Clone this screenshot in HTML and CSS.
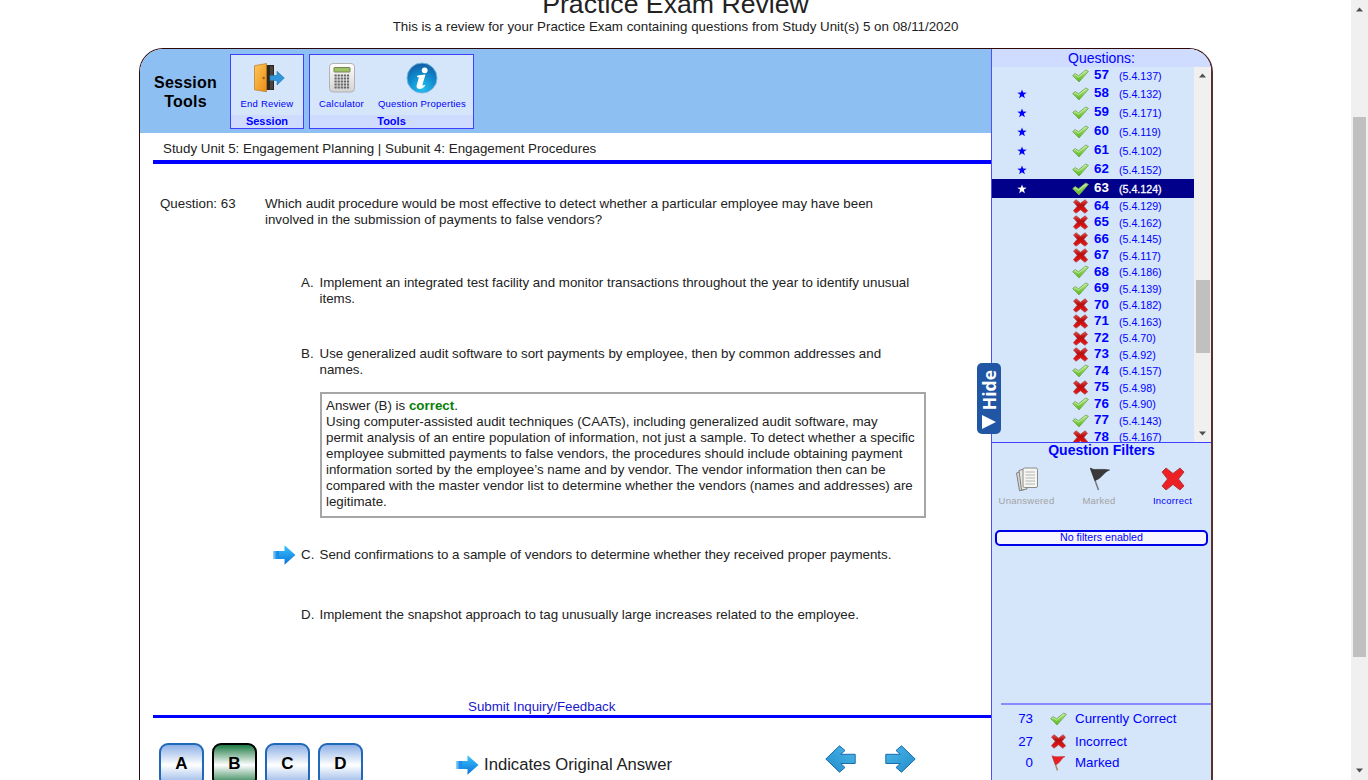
FILE: index.html
```
<!DOCTYPE html>
<html lang="en">
<head>
<meta charset="utf-8">
<title>Practice Exam Review</title>
<link rel="stylesheet" href="styles.css">
</head>
<body>
<svg class="defs" width="0" height="0">
  <defs>
    <linearGradient id="gGreen" x1="0" y1="0" x2="0" y2="1"><stop offset="0" stop-color="#b4ea8a"/><stop offset="1" stop-color="#55b914"/></linearGradient>
    <linearGradient id="gRed" x1="0" y1="0" x2="0" y2="1"><stop offset="0" stop-color="#e84a4a"/><stop offset=".4" stop-color="#b80d0d"/><stop offset="1" stop-color="#f01818"/></linearGradient>
    <linearGradient id="gArrow" x1="0" y1="0" x2="0" y2="1"><stop offset="0" stop-color="#3cc4fb"/><stop offset="1" stop-color="#0a73dd"/></linearGradient>
    <linearGradient id="gFade" x1="0" y1="0" x2="1" y2="0"><stop offset="0" stop-color="#2aa0ef" stop-opacity=".45"/><stop offset=".3" stop-color="#1c8fe8"/><stop offset="1" stop-color="#1587e6"/></linearGradient>
    <linearGradient id="gNav" x1="0" y1="0" x2="1" y2="1"><stop offset="0" stop-color="#49b8ea"/><stop offset="1" stop-color="#238bc9"/></linearGradient>
    <linearGradient id="gDoor" x1="0" y1="0" x2="1" y2="1"><stop offset="0" stop-color="#ffc75a"/><stop offset="1" stop-color="#e98d14"/></linearGradient>
    <radialGradient id="gInfo" cx=".5" cy=".85" r=".8"><stop offset="0" stop-color="#26c1f2"/><stop offset=".6" stop-color="#1088cc"/><stop offset="1" stop-color="#1262a8"/></radialGradient>
    <linearGradient id="gCalc" x1="0" y1="0" x2="0" y2="1"><stop offset="0" stop-color="#fff"/><stop offset="1" stop-color="#d3d3d3"/></linearGradient>
    <symbol id="check" viewBox="0 0 17 14"><path d="M.7 6.600 3.200 4.600l3.300 2.200L13.800 1l2.600 1.400L7 13Z" fill="url(#gGreen)" stroke="#7ba75f" stroke-width=".9" stroke-linejoin="round"/><path d="m2.300 6.500 1-.7 3.200 2.300 7.300-5.900" fill="none" stroke="#dff6cc" stroke-width=".7"/></symbol>
    <symbol id="cross" viewBox="0 0 16 15"><path d="m1 3 2.600-2.200L8 4.200 12.600.8 15 3.200 11.400 7.300l3.800 4.500-2.800 2.400L8 10.800l-4.500 3.400L.9 11.800l3.800-4.500Z" fill="url(#gRed)" stroke="#ab4a4a" stroke-width=".8" stroke-linejoin="round"/></symbol>
    <symbol id="answerArrow" viewBox="0 0 23 20"><path d="M0 6h12v8H0Z" fill="url(#gFade)"/><path d="M11.500.3 22.500 10l-11 9.700V14H6V6h5.500Z" fill="url(#gArrow)"/></symbol>
    <symbol id="navArrow" viewBox="0 0 31 28"><path d="M.8 9.300h14.500L11 5.500 16.500.8 30.200 14 16.500 27.200 11 22.500l4.300-4H.8Z" fill="url(#gNav)" stroke="#1b6cab" stroke-width="1"/></symbol>
    <symbol id="star" viewBox="0 0 10 10"><path d="m5 .4 1.150 3.200 3.550.05-2.850 2.100 1.050 3.450L5 7.200 2.100 9.200l1.050-3.450L.3 3.650l3.550-.05Z" fill="currentColor"/></symbol>
  </defs>
</svg>

<div class="viewport">
  <div class="page">
    <h1 class="title">Practice Exam Review</h1>
    <p class="subtitle">This is a review for your Practice Exam containing questions from Study Unit(s) 5 on 08/11/2020</p>

    <div class="exam">
      <main class="main">
        <div class="toolbar">
          <div class="toolbar-title">Session<br>Tools</div>
          <div class="group">
            <div class="tools">
              <div class="tool tool-end">
                <svg width="32" height="32" viewBox="0 0 32 32"><path d="M13 3h8v25h-8Z" fill="#292622"/><path d="m17 4 3 .5V27l-3 .7Z" fill="#4a443c"/><path d="m1.500 3.700 12-2.200v28.300l-12-2Z" fill="url(#gDoor)" stroke="#b87a22" stroke-width=".7"/><circle cx="10.700" cy="16" r="1.200" fill="#a65b13"/><path d="M17 13.500h7V9.300l7.300 6.700-7.300 7v-4.500h-7Z" fill="#3296da" stroke="#2673ac" stroke-width=".6"/></svg>
                <span>End Review</span>
              </div>
            </div>
            <div class="group-name">Session</div>
          </div>
          <div class="group">
            <div class="tools">
              <div class="tool tool-calc">
                <svg width="32" height="32" viewBox="0 0 32 32"><rect x="3.500" y="1.500" width="25" height="28.500" rx="3.500" fill="url(#gCalc)" stroke="#b2b2b2"/><rect x="8" y="5.500" width="16" height="4.500" rx=".5" fill="#9fc263" stroke="#75845a"/><g stroke="#656565" stroke-width="2.200" stroke-dasharray="2.200 .9"><path d="M8.500 13.500h15M8.500 16.500h15M8.500 19.500h15M8.500 22.500h15M8.500 25.500h15"/></g></svg>
                <span>Calculator</span>
              </div>
              <div class="tool tool-props">
                <svg width="32" height="32" viewBox="0 0 32 32"><circle cx="16" cy="16" r="15" fill="url(#gInfo)" stroke="#6db4de" stroke-width="1"/><circle cx="18.700" cy="8.300" r="2.900" fill="#fff"/><path d="M11.300 13.700c2-.8 5-1.100 8.200-1.300l-3 10c-.2 1.300.5 1.500 2.300.3l.5.8c-2 2.600-4 3.500-6 3.400-2.500-.1-3.100-1.700-2.600-3.600l2.200-7.700-2-.7Z" fill="#fff"/></svg>
                <span>Question Properties</span>
              </div>
            </div>
            <div class="group-name">Tools</div>
          </div>
        </div>

        <div class="unit">Study Unit 5: Engagement Planning | Subunit 4: Engagement Procedures</div>

        <div class="question">
          <div class="question-no">Question: 63</div>
          <div class="question-text">Which audit procedure would be most effective to detect whether a particular employee may have been<br>involved in the submission of payments to false vendors?</div>
        </div>

        <div class="choices">
          <div class="choice choice-a"><span class="mark"></span><span class="letter">A.</span><span>Implement an integrated test facility and monitor transactions throughout the year to identify unusual<br>items.</span></div>
          <div class="choice choice-b"><span class="mark"></span><span class="letter">B.</span><span>Use generalized audit software to sort payments by employee, then by common addresses and<br>names.</span></div>
          <div class="explain">Answer (B) is <b class="correct">correct</b>.<br>Using computer-assisted audit techniques (CAATs), including generalized audit software, may<br>permit analysis of an entire population of information, not just a sample. To detect whether a specific<br>employee submitted payments to false vendors, the procedures should include obtaining payment<br>information sorted by the employee’s name and by vendor. The vendor information then can be<br>compared with the master vendor list to determine whether the vendors (names and addresses) are<br>legitimate.</div>
          <div class="choice choice-c"><span class="mark"><svg width="23" height="20"><use href="#answerArrow"/></svg></span><span class="letter">C.</span><span>Send confirmations to a sample of vendors to determine whether they received proper payments.</span></div>
          <div class="choice choice-d"><span class="mark"></span><span class="letter">D.</span><span>Implement the snapshot approach to tag unusually large increases related to the employee.</span></div>
        </div>

        <div class="feedback"><a class="link">Submit Inquiry/Feedback</a></div>

        <div class="answer-bar">
          <div class="answers">
            <div class="answer">A</div><div class="answer answer-right">B</div><div class="answer">C</div><div class="answer">D</div>
          </div>
          <div class="legend"><svg width="23" height="20"><use href="#answerArrow"/></svg><span>Indicates Original Answer</span></div>
          <div class="nav"><svg class="prev" width="31" height="28"><use href="#navArrow"/></svg><svg width="31" height="28"><use href="#navArrow"/></svg></div>
        </div>
      </main>

      <aside class="side">
        <div class="side-title">Questions:</div>
        <div class="list-box">
          <div class="list">
            <div class="row"><i class="star"></i><svg class="ic"><use href="#check"/></svg><b>57</b><span>(5.4.137)</span></div>
            <div class="row starred"><i class="star"><svg><use href="#star"/></svg></i><svg class="ic"><use href="#check"/></svg><b>58</b><span>(5.4.132)</span></div>
            <div class="row starred"><i class="star"><svg><use href="#star"/></svg></i><svg class="ic"><use href="#check"/></svg><b>59</b><span>(5.4.171)</span></div>
            <div class="row starred"><i class="star"><svg><use href="#star"/></svg></i><svg class="ic"><use href="#check"/></svg><b>60</b><span>(5.4.119)</span></div>
            <div class="row starred"><i class="star"><svg><use href="#star"/></svg></i><svg class="ic"><use href="#check"/></svg><b>61</b><span>(5.4.102)</span></div>
            <div class="row starred"><i class="star"><svg><use href="#star"/></svg></i><svg class="ic"><use href="#check"/></svg><b>62</b><span>(5.4.152)</span></div>
            <div class="row starred current"><i class="star"><svg><use href="#star"/></svg></i><svg class="ic"><use href="#check"/></svg><b>63</b><span>(5.4.124)</span></div>
            <div class="row"><i class="star"></i><svg class="ic x"><use href="#cross"/></svg><b>64</b><span>(5.4.129)</span></div>
            <div class="row"><i class="star"></i><svg class="ic x"><use href="#cross"/></svg><b>65</b><span>(5.4.162)</span></div>
            <div class="row"><i class="star"></i><svg class="ic x"><use href="#cross"/></svg><b>66</b><span>(5.4.145)</span></div>
            <div class="row"><i class="star"></i><svg class="ic x"><use href="#cross"/></svg><b>67</b><span>(5.4.117)</span></div>
            <div class="row"><i class="star"></i><svg class="ic"><use href="#check"/></svg><b>68</b><span>(5.4.186)</span></div>
            <div class="row"><i class="star"></i><svg class="ic"><use href="#check"/></svg><b>69</b><span>(5.4.139)</span></div>
            <div class="row"><i class="star"></i><svg class="ic x"><use href="#cross"/></svg><b>70</b><span>(5.4.182)</span></div>
            <div class="row"><i class="star"></i><svg class="ic x"><use href="#cross"/></svg><b>71</b><span>(5.4.163)</span></div>
            <div class="row"><i class="star"></i><svg class="ic x"><use href="#cross"/></svg><b>72</b><span>(5.4.70)</span></div>
            <div class="row"><i class="star"></i><svg class="ic x"><use href="#cross"/></svg><b>73</b><span>(5.4.92)</span></div>
            <div class="row"><i class="star"></i><svg class="ic"><use href="#check"/></svg><b>74</b><span>(5.4.157)</span></div>
            <div class="row"><i class="star"></i><svg class="ic x"><use href="#cross"/></svg><b>75</b><span>(5.4.98)</span></div>
            <div class="row"><i class="star"></i><svg class="ic"><use href="#check"/></svg><b>76</b><span>(5.4.90)</span></div>
            <div class="row"><i class="star"></i><svg class="ic"><use href="#check"/></svg><b>77</b><span>(5.4.143)</span></div>
            <div class="row"><i class="star"></i><svg class="ic x"><use href="#cross"/></svg><b>78</b><span>(5.4.167)</span></div>
          </div>
          <div class="bar bar-list">
            <svg width="9" height="5" viewBox="0 0 9 5"><path d="M1 4.500 4.500.5 8 4.500Z" fill="#505050"/></svg>
            <div class="thumb"></div>
            <svg width="9" height="5" viewBox="0 0 9 5"><path d="M1 .5 4.500 4.500 8 .5Z" fill="#505050"/></svg>
          </div>
        </div>
        <div class="filters">
          <h2 class="filters-title">Question Filters</h2>
          <div class="filter-row">
            <div class="filter off">
              <svg width="26" height="26" viewBox="0 0 26 26"><path d="m2.500 7 4-1.500 4 18-5 1.300Z" fill="#d6d6d2" stroke="#777" stroke-width=".9"/><path d="m5 4.500 5-1.500 3 20-5.500 1Z" fill="#e7e7e3" stroke="#777" stroke-width=".9"/><rect x="9" y="2" width="14.500" height="19.500" rx="1.500" fill="#f5f5f2" stroke="#8a8a8a"/><path d="M11.500 6h9.500M11.500 9h9.500M11.500 12h9.500M11.500 15h9.500M11.500 18h9.500" stroke="#b5b5b2" stroke-width="1"/></svg>
              <span>Unanswered</span>
            </div>
            <div class="filter off">
              <svg width="26" height="26" viewBox="0 0 26 26"><path d="m4.500 2 8 22" stroke="#777" stroke-width="1.500"/><path d="M4.500 2.200c4 2.600 8 .2 19 1.800-6 2-7 8-14.500 10.500Z" fill="#3a3a3a" stroke="#222" stroke-width=".6"/></svg>
              <span>Marked</span>
            </div>
            <div class="filter">
              <svg width="26" height="26" viewBox="0 0 26 26"><path d="m2 6 4-4 7 5.500L20 2l4 4-5.500 7L24 20l-4 4-7-5.500L6 24l-4-4 5.500-7Z" fill="#ed2024" stroke="#a9343a" stroke-width=".9"/></svg>
              <span>Incorrect</span>
            </div>
          </div>
          <div class="filter-state">No filters enabled</div>
        </div>
        <div class="stats">
          <div class="stat"><span class="n">73</span><svg class="ic"><use href="#check"/></svg><span>Currently Correct</span></div>
          <div class="stat"><span class="n">27</span><svg class="ic x"><use href="#cross"/></svg><span>Incorrect</span></div>
          <div class="stat stat-marked"><span class="n">0</span><svg class="ic flag" viewBox="0 0 17 16"><path d="m3 2 4.500 13.500" stroke="#aa8a66" stroke-width="1.500"/><path d="M2 .8c4 2 8 .2 13 .8-4 1.700-4 6.200-9.500 8.200Z" fill="#ea1f24" stroke="#b92d30" stroke-width=".5"/></svg><span>Marked</span></div>
        </div>
      </aside>

      <div class="hide-tab"><svg width="16" height="16" viewBox="0 0 16 16"><path d="M1 1v14L15 8Z" fill="#fff"/></svg><span>Hide</span></div>
    </div>
  </div>
  <div class="bar bar-page">
    <svg width="9" height="5" viewBox="0 0 9 5"><path d="M1 4.500 4.500.5 8 4.500Z" fill="#505050"/></svg>
    <div class="thumb"></div>
    <svg width="9" height="5" viewBox="0 0 9 5"><path d="M1 .5 4.500 4.500 8 .5Z" fill="#505050"/></svg>
  </div>
</div>
</body>
</html>
```
FILE: styles.css
```
* { box-sizing: border-box; }
body {
  margin: 0;
  height: 780px;
  overflow: hidden;
  background: #fff;
  color: #222;
  font: 13.333px/16px "Liberation Sans", Arial, sans-serif;
}
svg { display: block; flex: none; }
.defs { position: absolute; }
.viewport { display: flex; height: 780px; }
.page { width: 1351px; height: 780px; overflow: hidden; }
.title {
  margin: -11px 0 0;
  font-size: 26.667px;
  font-weight: 400;
  line-height: 30px;
  text-align: center;
}
.subtitle { margin: 0 0 13px; text-align: center; }

.exam {
  position: relative;
  display: flex;
  width: 1074px;
  height: 800px;
  margin-left: 139px;
  border: 1px solid #300808;
  border-right: 2px solid #583030;
  border-radius: 24px 24px 0 0;
}
.main { width: 851px; }
.toolbar {
  display: flex;
  height: 84px;
  padding: 5px 0 0 14px;
  background: #8dbff3;
  border-radius: 23px 0 0 0;
}
.toolbar-title {
  width: 63px;
  margin: 19px 13px 0 0;
  color: #000;
  font-size: 16px;
  font-weight: 700;
  line-height: 19px;
  letter-spacing: .2px;
  text-align: center;
}
.group {
  height: 75px;
  margin-right: 5px;
  border: 1px solid #4040ff;
  background: #d5e5fa;
  color: #00f;
}
.tools { display: flex; height: 60px; }
.tool {
  display: flex;
  flex-direction: column;
  align-items: center;
  padding-top: 7px;
  font-size: 9.500px;
  letter-spacing: .22px;
  white-space: nowrap;
}
.tool span { margin-top: 2px; }
.tool-end { width: 72px; }
.tool-end svg { margin-left: 3px; }
.tool-calc { width: 63px; }
.tool-calc svg { margin-left: 1px; }
.tool-props { width: 100px; padding-right: 2px; }
.group-name {
  height: 13px;
  background: #cfdcff;
  font-size: 11px;
  font-weight: 700;
  line-height: 13px;
  text-align: center;
}
.unit {
  height: 31px;
  margin-left: 13px;
  padding: 8px 0 0 10px;
  border-bottom: 4px solid #00f;
}
.question { display: flex; height: 111px; padding: 32px 0 0 20px; }
.question-no { width: 105px; }
.choices { height: 454px; padding-left: 133px; }
.choice { display: flex; }
.mark { width: 28px; }
.mark svg { margin-top: -2px; }
.letter { width: 18.500px; }
.choice-a { height: 71px; }
.choice-b { height: 46px; }
.explain {
  width: 606px;
  height: 126px;
  margin-left: 47px;
  padding: 4px 0 0 4px;
  border: 2px solid #a6a6a6;
  white-space: nowrap;
}
.correct { color: #088008; }
.choice-c { height: 89px; padding-top: 29px; }
.feedback {
  height: 21px;
  margin: -32px 0 0 13px;
  padding: 2px 0 0 315px;
  border-bottom: 3px solid #00f;
}
.link { color: #1a1acc; }
.answer-bar { display: flex; padding: 25px 0 0 19px; }
.answers { display: flex; gap: 8px; width: 297px; }
.answer {
  width: 45px;
  height: 44px;
  border: 2px solid #2068b8;
  border-radius: 9px;
  background: linear-gradient(#8fb1e6, #fff 50%, #8fb1e6);
  color: #000;
  font-size: 17px;
  font-weight: 700;
  line-height: 38px;
  text-align: center;
}
.answer-right {
  border-color: #000;
  background: linear-gradient(#1d7a43, #fff 50%, #1d7a43);
}
.legend { display: flex; width: 369px; padding-top: 12px; font-size: 16.667px; line-height: 19px; }
.legend span { margin-left: 5px; }
.nav { display: flex; gap: 29px; padding-top: 2px; }
.prev { transform: scaleX(-1); }

.side {
  width: 220px;
  border-left: 1px solid #5050f5;
  border-radius: 0 22px 0 0;
  background: #d5e5fa;
  color: #00f;
  overflow: hidden;
}
.side-title {
  height: 18px;
  background: #cfdcff;
  font-size: 14px;
  line-height: 19px;
  text-align: center;
}
.list-box { display: flex; height: 375px; }
.list { width: 202px; height: 375px; overflow: hidden; padding-top: .5px; }
.row { display: flex; height: 16.500px; align-items: center; }
.starred { height: 19px; }
.current { background: #00008b; color: #fff; }
.current span { -webkit-text-stroke: .3px #fff; }
.star { width: 80px; padding-left: 25px; }
.star svg { width: 10px; height: 10px; }
.ic { width: 17px; height: 14px; }
.ic.x { height: 15px; }
.ic.flag { height: 16px; }
.row b { width: 25px; margin: -1px 0 0 5px; }
.row span { font-size: 10.667px; }
.bar { display: flex; flex-direction: column; align-items: center; background: #f0f0f0; }
.bar .thumb { background: #c0c0c0; }
.bar-list { width: 17px; padding: 6px 0; justify-content: space-between; }
.bar-list .thumb { width: 14px; height: 73px; margin-top: 124px; }
.bar-page { width: 17px; height: 780px; padding: 7px 0; justify-content: space-between; }
.bar-page .thumb { width: 13px; height: 540px; margin-top: -6px; }
.filters { height: 261px; border-top: 1px solid #4040ff; }
.filters-title { margin: 0; font-size: 14px; line-height: 15px; text-align: center; }
.filter-row { display: flex; height: 72px; padding-top: 8px; }
.filter {
  display: flex;
  flex-direction: column;
  align-items: center;
  width: 73px;
  font-size: 9.500px;
  letter-spacing: .25px;
}
.filter span { margin-top: 1px; }
.filter:first-child { width: 69px; }
.filter:nth-child(2) { width: 76px; }
.filter:nth-child(3) { width: 71px; }
.filter.off span { color: #a3a3a3; }
.filter-state {
  width: 213px;
  height: 16px;
  margin-left: 3px;
  border: 2px solid #0000e8;
  border-radius: 5px;
  background: #f7f5ff;
  font-size: 10.667px;
  line-height: 11px;
  text-align: center;
}
.stats { margin-left: 9px; padding-top: 2px; border-top: 2px solid #8a8afc; }
.stat { display: flex; height: 23px; align-items: center; }
.stat .n { width: 32px; margin-right: 17px; text-align: right; }
.stat .ic { margin-right: 8px; }
.stat-marked { height: 20px; }

/* Collapse handle straddling the sidebar edge */
.hide-tab {
  position: absolute;
  left: 837px;
  top: 314px;
  display: flex;
  flex-direction: column-reverse;
  align-items: center;
  width: 24px;
  height: 71px;
  padding: 5px 0 4px;
  border-radius: 5px;
  background: #2156a5;
}
.hide-tab span {
  writing-mode: vertical-rl;
  transform: rotate(180deg);
  margin-bottom: 4px;
  color: #fff;
  font: 700 17.500px/22px "Open Sans", "Noto Sans", sans-serif;
}
```
